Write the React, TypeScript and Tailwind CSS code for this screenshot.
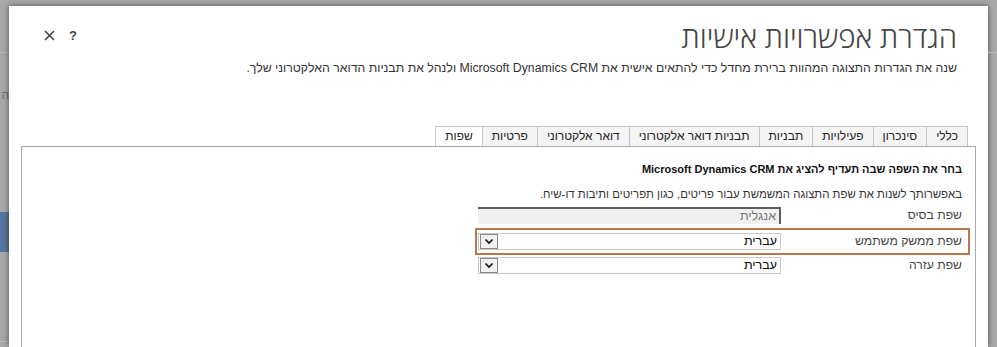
import React from "react";

const tabs = [
  "כללי",
  "סינכרון",
  "פעילויות",
  "תבניות",
  "תבניות דואר אלקטרוני",
  "דואר אלקטרוני",
  "פרטיות",
  "שפות",
];

function Chevron() {
  return (
    <svg width="10" height="7" viewBox="0 0 10 7" fill="none">
      <path d="M1.5 1.5 L5 5 L8.5 1.5" stroke="#111" strokeWidth="1.6" />
    </svg>
  );
}

function Select({ value }: { value: string }) {
  return (
    <div className="flex h-[17px] w-[303px] items-center border border-[#c6c6c6] bg-white">
      <span className="flex-1 pr-[3px] text-[12.5px] leading-none text-black">{value}</span>
      <div className="ml-[1px] flex h-[15px] w-[18px] items-center justify-center border border-[#8a8a8a] bg-[#f0f0f0]">
        <Chevron />
      </div>
    </div>
  );
}

export default function App() {
  return (
    <div
      className="flex h-[347px] w-[997px] overflow-hidden bg-[#a9a9a9]"
      style={{ fontFamily: '"Liberation Sans", "DejaVu Sans", sans-serif' }}
    >
      {/* dimmed page behind the dialog, left */}
      <div className="flex w-[9px] flex-col">
        <div className="mt-[52px] h-px bg-[#bdbdbd]" />
        <div className="mt-[36px] text-[12px] leading-none text-[#6f6f6f]" dir="rtl">
          ה
        </div>
        <div className="mt-[111px] h-[40px] bg-[#5776a2]" />
        <div className="mt-[89px] h-px bg-[#bdbdbd]" />
      </div>

      {/* dialog */}
      <div
        className="mt-[6px] flex flex-1 flex-col bg-white shadow-[0_0_6px_rgba(0,0,0,0.55)]"
        dir="rtl"
      >
        <div className="flex items-start pr-[31px] pl-[35px] pt-[11px]">
          <div className="flex-1">
            <h1
              className="text-[29.5px] font-light leading-[40px] text-[#444]"
              style={{ fontFamily: '"Open Sans", "Liberation Sans", sans-serif' }}
            >
              הגדרת אפשרויות אישיות
            </h1>
            <p className="mt-[3px] text-[12.3px] leading-[16px] text-[#333]">
              שנה את הגדרות התצוגה המהוות ברירת מחדל כדי להתאים אישית את Microsoft Dynamics CRM ולנהל את
              תבניות הדואר האלקטרוני שלך.
            </p>
          </div>
          <div className="mt-[12px] flex items-center gap-[14px] text-[#444]" dir="ltr">
            <svg width="11" height="11" viewBox="0 0 11 11">
              <path d="M1 1 L10 10 M10 1 L1 10" stroke="#444" strokeWidth="1.6" />
            </svg>
            <span className="text-[13px] font-bold leading-none">?</span>
          </div>
        </div>

        {/* tabs */}
        <div className="mt-[50px] flex pr-[20px]">
          {tabs.map((t, i) => {
            const active = i === tabs.length - 1;
            return (
              <div
                key={t}
                className={`h-[21px] border border-[#c6c6c6] px-[9px] text-[12px] leading-[19px] text-[#222] ${
                  i > 0 ? "-mr-px" : ""
                } ${active ? "border-b-white bg-white" : "bg-[#f4f4f4]"}`}
              >
                {t}
              </div>
            );
          })}
        </div>

        {/* tab body */}
        <div className="-mt-px mr-[12px] ml-[12px] flex-1 border border-b-0 border-[#a6a9b0] pr-[13px] pt-[14px]">
          <div className="text-[11px] font-bold leading-[16px] text-[#111]">
            בחר את השפה שבה תעדיף להציג את Microsoft Dynamics CRM
          </div>
          <div className="mt-[9px] text-[11.4px] leading-[16px] text-[#333]">
            באפשרותך לשנות את שפת התצוגה המשמשת עבור פריטים, כגון תפריטים ותיבות דו-שיח.
          </div>

          <div className="mt-[2px] flex flex-col">
            <div className="flex h-[23px] items-center">
              <span className="w-[181px] text-[12.2px] text-[#444]">שפת בסיס</span>
              <div className="flex h-[17px] w-[303px] items-center border-t-2 border-r-2 border-[#5e5e5e] bg-[#f0f0f0] pr-[3px] text-[12.5px] leading-none text-[#777]">
                אנגלית
              </div>
            </div>
            <div className="relative mt-[3px] flex h-[23px] items-center">
              <span className="w-[181px] text-[12.2px] text-[#444]">שפת ממשק משתמש</span>
              <Select value="עברית" />
              <span className="pointer-events-none absolute top-[-2px] right-[-8px] h-[27px] w-[495px] border-2 border-[#b7774f]" />
            </div>
            <div className="mt-[1px] flex h-[23px] items-center">
              <span className="w-[181px] text-[12.2px] text-[#444]">שפת עזרה</span>
              <Select value="עברית" />
            </div>
          </div>
        </div>
      </div>

      {/* dimmed page behind the dialog, right */}
      <div className="flex w-[9px] flex-col">
        <div className="mt-[52px] h-px bg-[#bdbdbd]" />
      </div>
    </div>
  );
}
